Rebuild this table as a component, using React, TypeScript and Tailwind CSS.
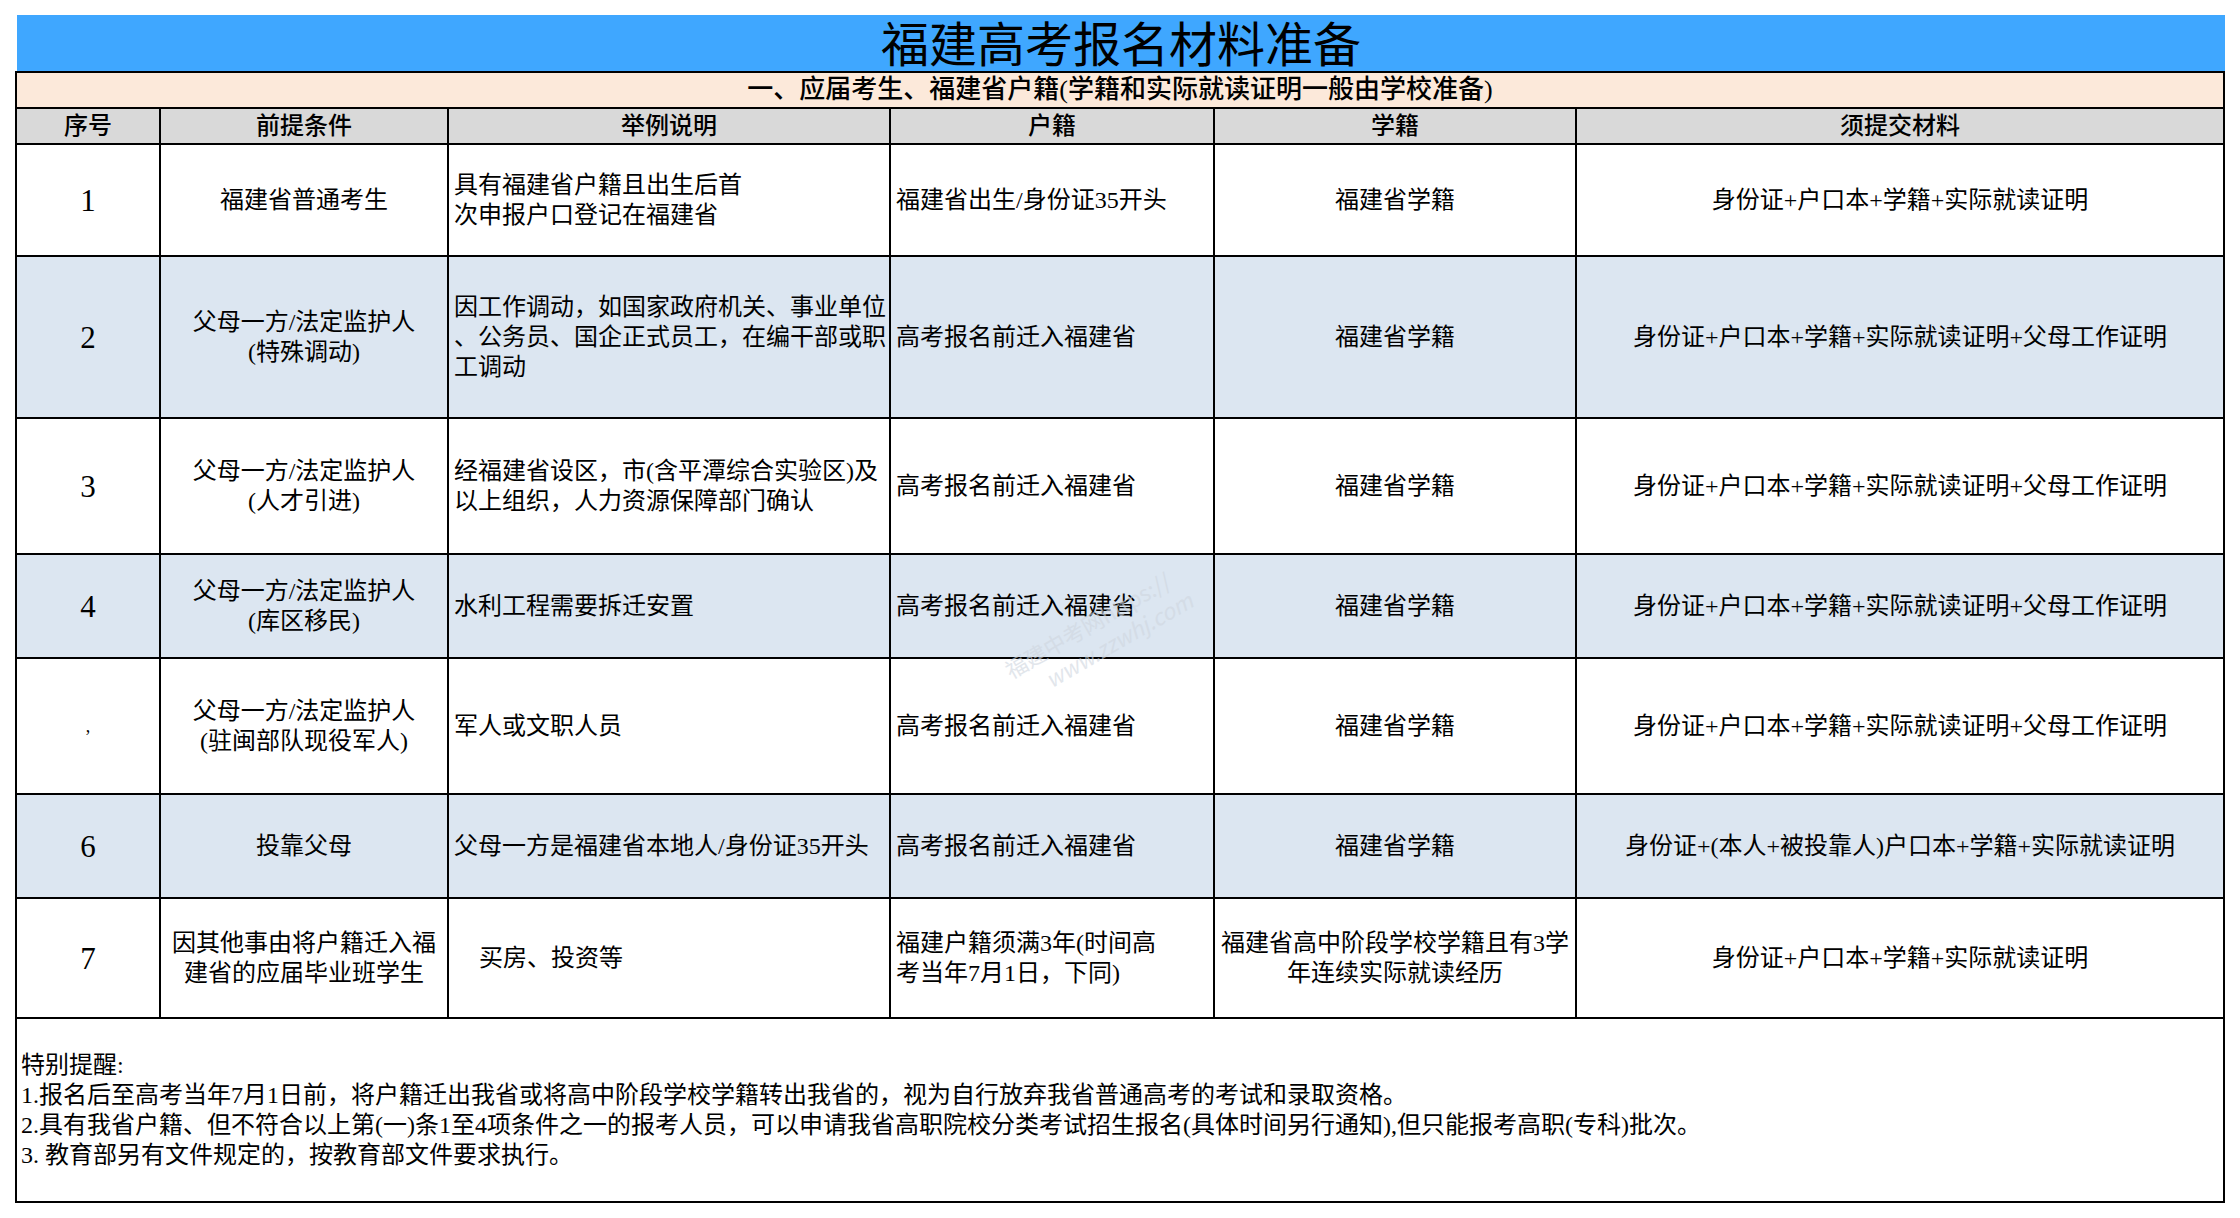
import React from "react";

type Row = {
  no: string;
  noSmall?: boolean;
  cond: string[];
  example: string[];
  exampleIndent?: boolean;
  hukou: string[];
  xueji: string[];
  materials: string;
  alt: boolean;
};

const rows: Row[] = [
  {
    no: "1",
    cond: ["福建省普通考生"],
    example: ["具有福建省户籍且出生后首", "次申报户口登记在福建省"],
    hukou: ["福建省出生/身份证35开头"],
    xueji: ["福建省学籍"],
    materials: "身份证+户口本+学籍+实际就读证明",
    alt: false,
  },
  {
    no: "2",
    cond: ["父母一方/法定监护人", "(特殊调动)"],
    example: ["因工作调动，如国家政府机关、事业单位", "、公务员、国企正式员工，在编干部或职", "工调动"],
    hukou: ["高考报名前迁入福建省"],
    xueji: ["福建省学籍"],
    materials: "身份证+户口本+学籍+实际就读证明+父母工作证明",
    alt: true,
  },
  {
    no: "3",
    cond: ["父母一方/法定监护人", "(人才引进)"],
    example: ["经福建省设区，市(含平潭综合实验区)及", "以上组织，人力资源保障部门确认"],
    hukou: ["高考报名前迁入福建省"],
    xueji: ["福建省学籍"],
    materials: "身份证+户口本+学籍+实际就读证明+父母工作证明",
    alt: false,
  },
  {
    no: "4",
    cond: ["父母一方/法定监护人", "(库区移民)"],
    example: ["水利工程需要拆迁安置"],
    hukou: ["高考报名前迁入福建省"],
    xueji: ["福建省学籍"],
    materials: "身份证+户口本+学籍+实际就读证明+父母工作证明",
    alt: true,
  },
  {
    no: ",",
    noSmall: true,
    cond: ["父母一方/法定监护人", "(驻闽部队现役军人)"],
    example: ["军人或文职人员"],
    hukou: ["高考报名前迁入福建省"],
    xueji: ["福建省学籍"],
    materials: "身份证+户口本+学籍+实际就读证明+父母工作证明",
    alt: false,
  },
  {
    no: "6",
    cond: ["投靠父母"],
    example: ["父母一方是福建省本地人/身份证35开头"],
    hukou: ["高考报名前迁入福建省"],
    xueji: ["福建省学籍"],
    materials: "身份证+(本人+被投靠人)户口本+学籍+实际就读证明",
    alt: true,
  },
  {
    no: "7",
    cond: ["因其他事由将户籍迁入福", "建省的应届毕业班学生"],
    example: ["买房、投资等"],
    exampleIndent: true,
    hukou: ["福建户籍须满3年(时间高", "考当年7月1日，下同)"],
    xueji: ["福建省高中阶段学校学籍且有3学", "年连续实际就读经历"],
    materials: "身份证+户口本+学籍+实际就读证明",
    alt: false,
  },
];

function Lines({ lines }: { lines: string[] }) {
  return (
    <>
      {lines.map((l, i) => (
        <div key={i} className="whitespace-nowrap">
          {l}
        </div>
      ))}
    </>
  );
}

export default function App() {
  return (
    <div className="min-h-screen bg-white pt-[15px] pl-[15px] text-black font-['Liberation_Serif','Noto_Sans_CJK_SC',serif]">
      <div className="w-[2210px]">
        <div className="ml-[2px] flex h-[56px] w-[2208px] items-center justify-center bg-[#3FA7FF] pt-[6px] text-[48px] leading-none">
          福建高考报名材料准备
        </div>
        <div className="relative grid grid-cols-[142px_286px_440px_322px_360px_646px] grid-rows-[34px_34px_110px_160px_134px_102px_134px_102px_118px_182px] gap-[2px] bg-black p-[2px]">
          <div className="col-span-6 flex items-center justify-center bg-[#FCE9DA] text-[26px] font-medium leading-none">
            一、应届考生、福建省户籍(学籍和实际就读证明一般由学校准备)
          </div>

          {["序号", "前提条件", "举例说明", "户籍", "学籍", "须提交材料"].map((h) => (
            <div
              key={h}
              className="flex items-center justify-center bg-[#D9D9D9] text-[24px] font-medium leading-none"
            >
              {h}
            </div>
          ))}

          {rows.map((r, idx) => {
            const bg = r.alt ? "bg-[#DCE6F1]" : "bg-white";
            return (
              <React.Fragment key={idx}>
                <div className={`${bg} flex items-center justify-center`}>
                  {r.noSmall ? (
                    <span className="text-[18px] leading-none">{r.no}</span>
                  ) : (
                    <span className="text-[31px] leading-none">{r.no}</span>
                  )}
                </div>
                <div className={`${bg} flex flex-col items-center justify-center text-center text-[24px] leading-[30px]`}>
                  <Lines lines={r.cond} />
                </div>
                <div
                  className={`${bg} flex flex-col justify-center text-[24px] leading-[30px] ${
                    r.exampleIndent ? "pl-[30px]" : "pl-[5px]"
                  }`}
                >
                  <Lines lines={r.example} />
                </div>
                <div className={`${bg} flex flex-col justify-center pl-[5px] text-[24px] leading-[30px]`}>
                  <Lines lines={r.hukou} />
                </div>
                <div className={`${bg} flex flex-col items-center justify-center text-center text-[24px] leading-[30px]`}>
                  <Lines lines={r.xueji} />
                </div>
                <div className={`${bg} flex items-center justify-center text-[24px] leading-[30px] whitespace-nowrap`}>
                  {r.materials}
                </div>
              </React.Fragment>
            );
          })}

          <div className="col-span-6 flex flex-col justify-center bg-white pl-[4px] text-[24px] leading-[30px]">
            <div>特别提醒:</div>
            <div className="whitespace-nowrap">
              1.报名后至高考当年7月1日前，将户籍迁出我省或将高中阶段学校学籍转出我省的，视为自行放弃我省普通高考的考试和录取资格。
            </div>
            <div className="whitespace-nowrap">
              2.具有我省户籍、但不符合以上第(一)条1至4项条件之一的报考人员，可以申请我省高职院校分类考试招生报名(具体时间另行通知),但只能报考高职(专科)批次。
            </div>
            <div className="whitespace-nowrap">3. 教育部另有文件规定的，按教育部文件要求执行。</div>
          </div>

          <div
            aria-hidden="true"
            className="pointer-events-none absolute left-[985px] top-[535px] rotate-[-30deg] text-[22px] leading-[28px] text-[#cfd6df] opacity-60 font-['Noto_Sans_CJK_SC',sans-serif]"
          >
            <div>福建中考网https://</div>
            <div className="pl-[30px] italic">www.zzwhj.com</div>
          </div>
        </div>
      </div>
    </div>
  );
}
